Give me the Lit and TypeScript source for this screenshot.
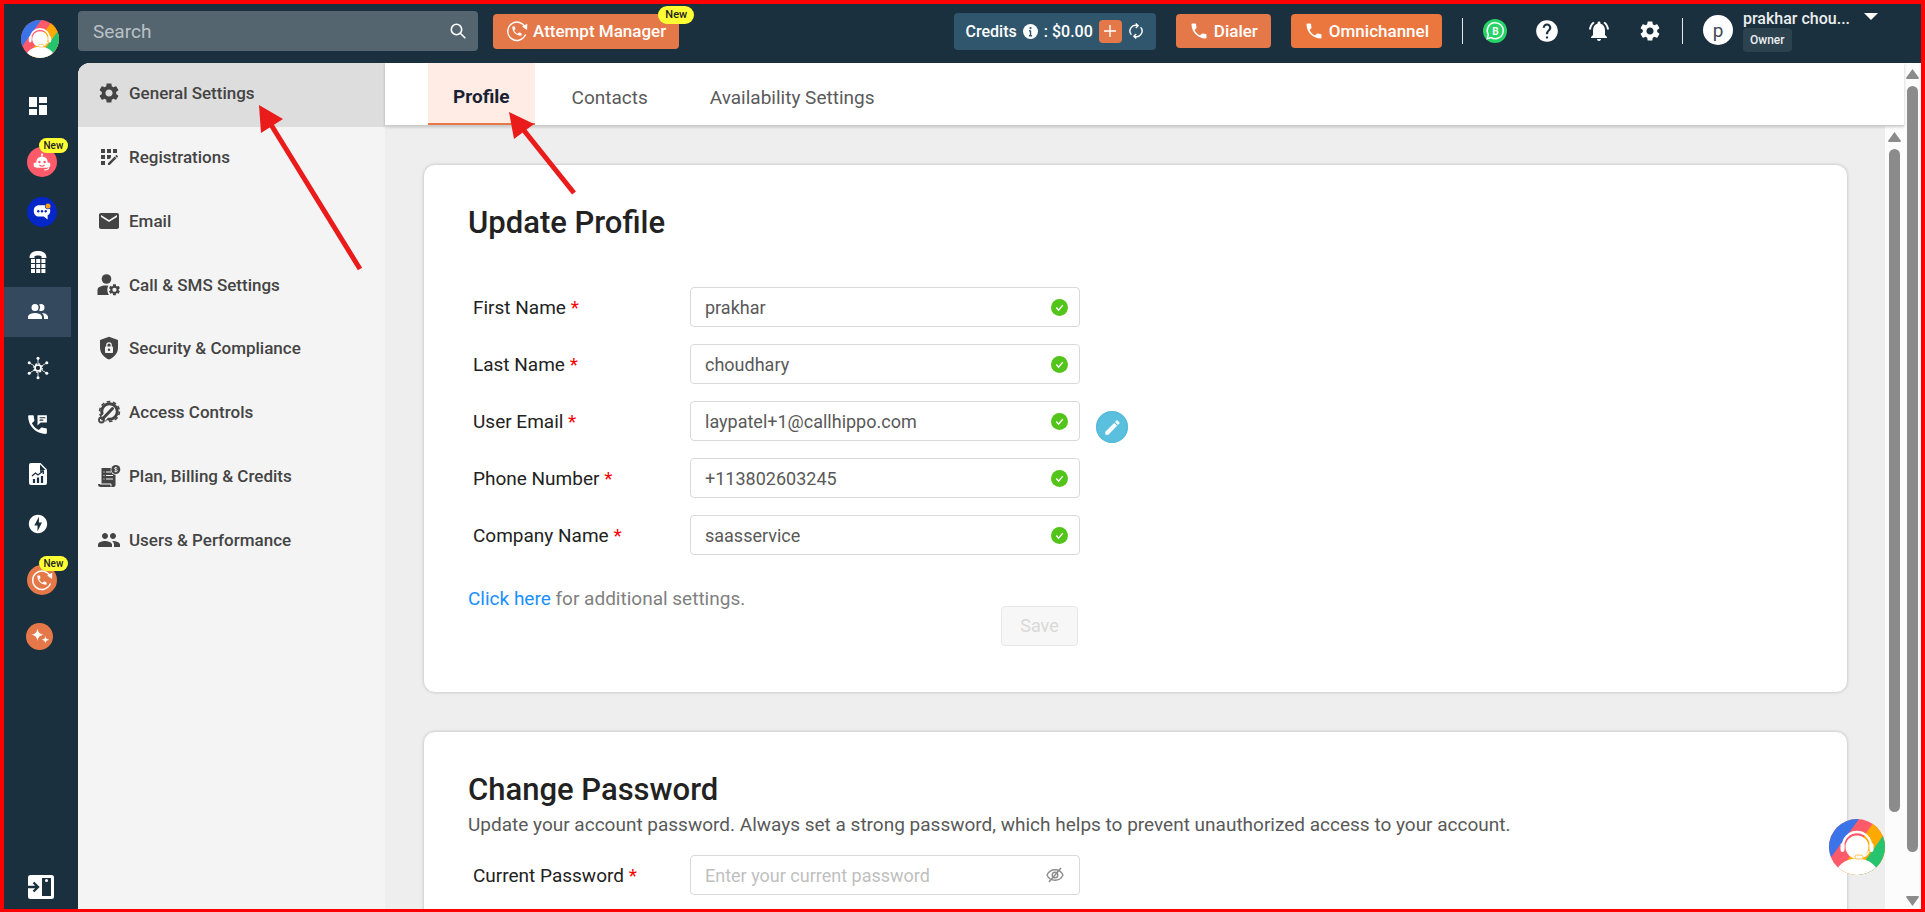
import { LitElement, html, svg, css, nothing, SVGTemplateResult, TemplateResult } from "lit";
import { customElement, state } from "lit/decorators.js";
import { classMap } from "lit/directives/class-map.js";

const icon = (size: number, body: SVGTemplateResult, box = "0 0 24 24") =>
  html`<svg width=${size} height=${size} viewBox=${box} fill="currentColor" aria-hidden="true">${body}</svg>`;

const p = (d: string) => svg`<path d=${d}></path>`;

const gear = p("M19.14 12.94c.04-.3.06-.61.06-.94 0-.32-.02-.64-.07-.94l2.03-1.58c.18-.14.23-.41.12-.61l-1.92-3.32c-.12-.22-.37-.29-.59-.22l-2.39.96c-.5-.38-1.03-.7-1.62-.94l-.36-2.54c-.04-.24-.24-.41-.48-.41h-3.84c-.24 0-.43.17-.47.41l-.36 2.54c-.59.24-1.13.57-1.62.94l-2.39-.96c-.22-.08-.47 0-.59.22L2.74 8.87c-.12.21-.08.47.12.61l2.03 1.58c-.05.3-.09.63-.09.94s.02.64.07.94l-2.03 1.58c-.18.14-.23.41-.12.61l1.92 3.32c.12.22.37.29.59.22l2.39-.96c.5.38 1.03.7 1.62.94l.36 2.54c.05.24.24.41.48.41h3.84c.24 0 .44-.17.47-.41l.36-2.54c.59-.24 1.13-.56 1.62-.94l2.39.96c.22.08.47 0 .59-.22l1.92-3.32c.12-.22.07-.47-.12-.61l-2.01-1.58zM12 15.6c-1.98 0-3.6-1.62-3.6-3.6s1.62-3.6 3.6-3.6 3.6 1.62 3.6 3.6-1.62 3.6-3.6 3.6z");
const phone = p("M6.62 10.79c1.44 2.83 3.76 5.14 6.59 6.59l2.2-2.2c.27-.27.67-.36 1.02-.24 1.12.37 2.33.57 3.57.57.55 0 1 .45 1 1V20c0 .55-.45 1-1 1-9.39 0-17-7.61-17-17 0-.55.45-1 1-1h3.5c.55 0 1 .45 1 1 0 1.25.2 2.45.57 3.57.11.35.03.74-.25 1.02l-2.2 2.2z");
const retry = svg`
  <path d="M21.2 8.6A10 10 0 1 0 21 16.4" fill="none" stroke="currentColor" stroke-width="1.6" stroke-linecap="round"></path>
  <path d="M17.6 7.2l5.6-3-.2 6.8z"></path>
  <g transform="translate(5.2 5.4) scale(.56)">${phone}</g>`;

const icons = {
  dashboard: icon(24, p("M3 13h8V3H3v10zm0 8h8v-6H3v6zm10 0h8V11h-8v10zm0-18v6h8V3h-8z")),
  robot: icon(18, svg`
    <path d="M11.3 2h1.4v4h-1.4z"></path><circle cx="12" cy="2" r="1.5"></circle>
    <path d="M12 5c5 0 7.5 3 7.5 7v1H22c1 0 1 1 1 2v2c0 1-.5 2-2 2h-1.5v.5h-15V19H3c-1.5 0-2-1-2-2v-2c0-1 0-2 1-2h2.500v-1c0-4 2.500-7 7.500-7z"></path>
    <circle cx="8.5" cy="12" r="1.7" fill="#ff5a6a"></circle><circle cx="15.5" cy="12" r="1.7" fill="#ff5a6a"></circle>
    <path d="M8.5 16c2 1.8 5 1.8 7 0" stroke="#ff5a6a" stroke-width="1.4" fill="none"></path>
    <path d="M21 19c0 3-2.5 3.5-6 3.5" stroke="currentColor" stroke-width="1.5" fill="none"></path>`),
  chatbot: icon(18, svg`
    <path d="M8 3h8c4 0 7 3 7 7 0 3-1 5.5-3.5 6.5V22l-5-4H8c-4 0-7-3-7-7.5S4 3 8 3z"></path>
    <circle cx="7" cy="11" r="1.6" fill="#0527c8"></circle><circle cx="12" cy="11" r="1.6" fill="#0527c8"></circle><circle cx="17" cy="11" r="1.6" fill="#0527c8"></circle>
    <circle cx="20" cy="4" r="4.2" fill="#0527c8"></circle><circle cx="20" cy="4" r="3.4" fill="#ff9f1a"></circle>`),
  keypad: icon(24, svg`
    <path d="M3.5 8c0-4.500 3-7 8.500-7s8.500 2.500 8.500 7H15.500V6.200c-1-1-6-1-7 0V8z"></path>
    ${[9, 14, 19].map(y => [5, 10.2, 15.4].map(x => svg`<rect x=${x} y=${y} width="4" height="4"></rect>`))}`),
  users: icon(24, p("M16 17V19H2V17S2 13 9 13 16 17 16 17M12.5 7.5A3.5 3.5 0 1 0 9 11A3.5 3.5 0 0 0 12.5 7.5M15.94 13A5.32 5.32 0 0 1 18 17V19H22V17S22 13.37 15.94 13M15 4A3.39 3.39 0 0 0 13.07 4.59A5 5 0 0 1 13.07 10.41A3.39 3.39 0 0 0 15 11A3.5 3.5 0 0 0 15 4Z")),
  hub: icon(24, svg`
    <g fill="none" stroke="currentColor"><circle cx="12" cy="12" r="3" stroke-width="1.7"></circle><circle cx="12" cy="12" r="4.2" stroke-width="1.4" stroke-dasharray="1.7 1.6"></circle>
    <path d="M12 8V2M12 16v6M15.5 10l5-3M8.5 10l-5-3M15.5 14l5 3M8.5 14l-5 3" stroke-width=".8"></path></g>
    ${[[12, 2.2], [12, 21.8], [20.8, 6.8], [3.2, 6.8], [20.8, 17.2], [3.2, 17.2]].map(([x, y]) => svg`<circle cx=${x} cy=${y} r="1.5"></circle>`)}`),
  phoneMsg: icon(25, svg`
    ${p("M20 15.5c-1.25 0-2.45-.2-3.57-.57-.35-.11-.74-.03-1.02.24l-2.2 2.2c-2.83-1.44-5.15-3.75-6.59-6.58l2.2-2.21c.28-.27.36-.66.25-1.01C8.7 6.45 8.5 5.25 8.5 4c0-.55-.45-1-1-1H4c-.55 0-1 .45-1 1 0 9.39 7.61 17 17 17 .55 0 1-.45 1-1v-3.5c0-.55-.45-1-1-1zM12 3v10l3-3h6V3h-9z")}
    <path d="M14 5.5h5.5M14 7.8h3.5" stroke="#1b303e" stroke-width="1.1"></path>`),
  report: icon(24, svg`
    <path d="M5 1h9.5L21 7.5V21a2 2 0 0 1-2 2H5a2 2 0 0 1-2-2V3a2 2 0 0 1 2-2z"></path>
    <path d="M14 2.5V8h5.5z" fill="#1b303e"></path>
    <g fill="none" stroke="#1b303e"><path d="M6 14l3.5-3 2.5 2 5-4M14 9h3.3v3" stroke-width="1.3"></path>
    <path d="M8 21v-4M12 21v-5.5M16 21v-7" stroke-width="2.2"></path></g>`),
  bolt: icon(22, p("M12 2.02c-5.51 0-9.98 4.47-9.98 9.98s4.47 9.98 9.98 9.98 9.98-4.47 9.98-9.98S17.51 2.02 12 2.02zM11.48 20v-6.26H8L13 4v6.26h3.35L11.48 20z")),
  attempt: icon(22, retry),
  sparkle: icon(20, svg`
    <path d="M9 3c.9 5 2.5 6.6 7.5 7.5C11.5 11.4 9.9 13 9 18c-.9-5-2.5-6.6-7.5-7.5C6.5 9.6 8.1 8 9 3z"></path>
    <path d="M18.5 12c.5 3 1.5 4 4.5 4.5-3 .5-4 1.5-4.5 4.5-.5-3-1.5-4-4.5-4.5 3-.5 4-1.5 4.5-4.5z"></path>`),
  panel: icon(28, svg`
    <rect x="1" y="2" width="26" height="24" rx="2.5"></rect>
    <rect x="15" y="5" width="9" height="18" fill="#1b303e"></rect><circle cx="19.5" cy="7.5" r="1.5" fill="currentColor"></circle>
    <path d="M1 14h9M6.5 9.5l4.5 4.5-4.5 4.5" fill="none" stroke="#1b303e" stroke-width="2.4"></path>`, "0 0 28 28"),
  settings: icon(24, gear),
  registration: icon(24, p("M10 4h4v4h-4zM4 16h4v4H4zM4 10h4v4H4zM4 4h4v4H4zM14 12.42V10h-4v4h2.42zM20.88 11.29l-1.17-1.17c-.16-.16-.42-.16-.58 0l-.88.88L20 12.75l.88-.88c.16-.16.16-.42 0-.58zM11 18.25V20h1.75l6.67-6.67-1.75-1.75zM16 4h4v4h-4z")),
  email: icon(24, p("M20 4H4c-1.1 0-1.99.9-1.99 2L2 18c0 1.1.9 2 2 2h16c1.1 0 2-.9 2-2V6c0-1.1-.9-2-2-2zm0 4l-8 5-8-5V6l8 5 8-5v2z")),
  userGear: icon(24, svg`
    <circle cx="9.5" cy="6" r="4.8"></circle><path d="M.5 22v-5c0-3 4-4.500 8-4.500 1 0 2 .1 2.800.3-1.500 2.700-1.300 6 .5 9.200z"></path>
    <g transform="translate(10.5 9.8) scale(.58)">${gear}</g>`),
  shield: icon(24, svg`
    <path d="M12 .8l9 3.2v7.5c0 5.5-3.8 10-9 12-5.2-2-9-6.5-9-12V4z"></path>
    <rect x="8" y="10.5" width="8" height="6.5" rx=".8" fill="#f4f4f4"></rect><path d="M9.8 11V9a2.2 2.2 0 0 1 4.4 0v2" fill="none" stroke="#f4f4f4" stroke-width="1.2"></path><circle cx="12" cy="13.7" r="1.2"></circle>`),
  access: icon(24, svg`
    <g fill="none" stroke="currentColor"><circle cx="12.5" cy="11.5" r="7.8" stroke-width="3"></circle><circle cx="12.5" cy="11.5" r="9.9" stroke-width="1.6" stroke-dasharray="3.6 2.62"></circle></g>
    <path d="M3 22L15.500 8.500" stroke="#f4f4f4" stroke-width="6"></path>
    <path d="M5.5 19L15.5 8.5" stroke="currentColor" stroke-width="3" stroke-linecap="round"></path>
    <circle cx="4.5" cy="20" r="2.500" fill="none" stroke="currentColor" stroke-width="1.8"></circle>`),
  billing: icon(24, svg`
    <path d="M4.5 4h10l1.500 6h2.500v11c0 1-.8 2-2 2H3.500c-1.500 0-2.500-1-2.500-3h3.500z"></path>
    <path d="M9 8h5M9 11.5h7M9 15h7M6.5 8h1M6.5 11.5h1M6.5 15h1M3 20h11v2.5" fill="none" stroke="#f4f4f4" stroke-width="1"></path>
    <circle cx="18.8" cy="5.5" r="5.2" fill="#f4f4f4"></circle><circle cx="18.8" cy="5.5" r="4.5"></circle>
    <path d="M20.4 4.2c-.5-1-3-1-3 .2 0 1.500 3 .8 3 2.300 0 1.200-2.500 1.200-3.200.2M18.800 2.800v5.500" fill="none" stroke="#f4f4f4" stroke-width=".8"></path>`),
  people: icon(24, p("M16 11c1.66 0 2.99-1.34 2.99-3S17.66 5 16 5c-1.66 0-3 1.34-3 3s1.34 3 3 3zm-8 0c1.66 0 2.99-1.34 2.99-3S9.66 5 8 5C6.34 5 5 6.34 5 8s1.34 3 3 3zm0 2c-2.33 0-7 1.17-7 3.5V19h14v-2.5c0-2.33-4.67-3.5-7-3.5zm8 0c-.29 0-.62.02-.97.05 1.16.84 1.97 1.97 1.97 3.45V19h6v-2.5c0-2.33-4.67-3.5-7-3.5z")),
  search: icon(16, svg`<g fill="none" stroke="currentColor" stroke-width="1.6"><circle cx="6.5" cy="6.5" r="5.2"></circle><path d="M10.3 10.3l5 5"></path></g>`, "0 0 16 16"),
  info: icon(15, svg`<circle cx="8" cy="8" r="8"></circle><circle cx="8" cy="4.3" r="1.2" fill="#30566d"></circle><path d="M8 6.8v5.7M6.5 7.2H8M6.3 12.5h3.4" stroke="#30566d" stroke-width="1.5"></path>`, "0 0 16 16"),
  plus: icon(12, svg`<path d="M6 0v12M0 6h12" stroke="currentColor" stroke-width="1.4"></path>`, "0 0 12 12"),
  sync: icon(16, svg`<g fill="none" stroke="currentColor" stroke-width="1.4"><path d="M3.4 11.7A5.6 5.6 0 0 1 9.5 2.7M12.6 4.3A5.6 5.6 0 0 1 6.5 13.3"></path><path d="M7.8.5l2.3 2.2-2.3 2.3M8.2 11l-2.3 2.3 2.3 2.2"></path></g>`, "0 0 16 16"),
  phone: icon(20, phone),
  whatsapp: html`<svg width="24" height="24" viewBox="0 0 24 24" aria-hidden="true"><circle cx="12" cy="12" r="12" fill="#25d366"></circle>
    <path d="M4.3 19.7l1-4a8 8 0 1 1 2.9 2.9z" fill="none" stroke="#fff" stroke-width="1.5"></path>
    <text x="12.4" y="15.8" text-anchor="middle" font-size="10" font-weight="700" fill="#fff">B</text></svg>`,
  help: icon(26, p("M12 2C6.48 2 2 6.48 2 12s4.48 10 10 10 10-4.48 10-10S17.52 2 12 2zm1 17h-2v-2h2v2zm2.07-7.75l-.9.92C13.45 12.9 13 13.5 13 15h-2v-.5c0-1.1.45-2.1 1.17-2.83l1.24-1.26c.37-.36.59-.86.59-1.41 0-1.1-.9-2-2-2s-2 .9-2 2H8c0-2.21 1.79-4 4-4s4 1.79 4 4c0 .88-.36 1.68-.93 2.25z")),
  bell: icon(24, p("M7.58 4.08L6.15 2.65C3.75 4.48 2.17 7.3 2.03 10.5h2c.15-2.65 1.51-4.97 3.55-6.42zm12.39 6.42h2c-.15-3.2-1.73-6.02-4.12-7.85l-1.42 1.43c2.02 1.45 3.39 3.77 3.54 6.42zM18 11c0-3.07-1.64-5.64-4.5-6.32V4c0-.83-.67-1.5-1.5-1.5s-1.5.67-1.5 1.5v.68C7.63 5.36 6 7.92 6 11v5l-2 2v1h16v-1l-2-2v-5zm-6 11c.14 0 .27-.01.4-.04.65-.14 1.18-.58 1.44-1.18.1-.24.15-.5.15-.78h-4c.01 1.1.9 2 2.01 2z")),
  caret: icon(14, svg`<path d="M0 3h14L7 10z"></path>`, "0 0 14 14"),
  check: html`<svg width="17" height="17" viewBox="0 0 17 17" aria-hidden="true"><circle cx="8.5" cy="8.5" r="8.5" fill="#52c41a"></circle><path d="M5.3 8.5l2.3 2.6 4.2-5" fill="none" stroke="#fff" stroke-width="1.4"></path></svg>`,
  pencil: icon(19, p("M3 17.25V21h3.75L17.81 9.94l-3.75-3.75L3 17.25zM20.71 7.04c.39-.39.39-1.02 0-1.41l-2.34-2.34c-.39-.39-1.02-.39-1.41 0l-1.83 1.83 3.75 3.75 1.83-1.83z")),
  eyeOff: icon(18, svg`<g fill="none" stroke="currentColor" stroke-width="1.4"><path d="M1 9c3.2-7 12.8-7 16 0-3.2 7-12.8 7-16 0z"></path><circle cx="9" cy="9" r="2.8"></circle><path d="M3 16L15 2" stroke-width="1.5"></path></g>`, "0 0 18 18"),
};

const logo = (size: number) => html`
  <svg width=${size} height=${size} viewBox="0 0 56 56" aria-hidden="true">
    <clipPath id="disc"><circle cx="28" cy="28" r="28"></circle></clipPath>
    <g clip-path="url(#disc)">
      <path d="M0 0h56v56H0z" fill="#ff5a6a"></path>
      <path d="M0 0h30L0 41z" fill="#3b74e8"></path>
      <path d="M47 0h9v56H8z" fill="#ffa900"></path>
      <path d="M56 14v42H26z" fill="#27c470"></path>
      <path d="M5 56c3-10 12-16.5 23-16.5S48 46 51 56z" fill="#fff"></path>
      <path d="M14 30v-3a14 14 0 0 1 28 0v3" fill="none" stroke="#fff" stroke-width="2.4"></path>
      <rect x="11.5" y="24" width="4" height="9" rx="2" fill="#fff"></rect>
      <rect x="40.5" y="24" width="4" height="9" rx="2" fill="#fff"></rect>
      <circle cx="28" cy="28" r="11.5" fill="#fff"></circle>
      <path d="M40 32c-1 3-3 5-6 6" fill="none" stroke="#fff" stroke-width="1.4"></path>
      <rect x="26" y="36" width="8" height="4" rx="2" fill="#fff" stroke="#ffc04d"></rect>
    </g>
  </svg>`;

interface RailItem { name: string; icon: TemplateResult; spaced?: boolean; disc?: string; badge?: boolean; }

const rail: RailItem[] = [
  { name: "Dashboard", icon: icons.dashboard },
  { name: "AI agent", icon: icons.robot, spaced: true, disc: "pink", badge: true },
  { name: "Chat", icon: icons.chatbot, disc: "blue" },
  { name: "Numbers", icon: icons.keypad },
  { name: "Users", icon: icons.users },
  { name: "Integrations", icon: icons.hub, spaced: true },
  { name: "Call logs", icon: icons.phoneMsg, spaced: true },
  { name: "Reports", icon: icons.report },
  { name: "Automation", icon: icons.bolt },
  { name: "Attempts", icon: icons.attempt, spaced: true, disc: "orange", badge: true },
  { name: "Assistant", icon: icons.sparkle, spaced: true, disc: "small" },
];

const menu: [string, TemplateResult][] = [
  ["General Settings", icons.settings],
  ["Registrations", icons.registration],
  ["Email", icons.email],
  ["Call & SMS Settings", icons.userGear],
  ["Security & Compliance", icons.shield],
  ["Access Controls", icons.access],
  ["Plan, Billing & Credits", icons.billing],
  ["Users & Performance", icons.people],
];

const fields = [
  { id: "first-name", label: "First Name", value: "prakhar", type: "text" },
  { id: "last-name", label: "Last Name", value: "choudhary", type: "text" },
  { id: "user-email", label: "User Email", value: "laypatel+1@callhippo.com", type: "email" },
  { id: "phone-number", label: "Phone Number", value: "+113802603245", type: "tel" },
  { id: "company-name", label: "Company Name", value: "saasservice", type: "text" },
];

@customElement("app-root")
export class AppRoot extends LitElement {
  @state() private rail = "Users";
  @state() private section = "General Settings";
  @state() private tab = "Profile";

  static styles = css`
    :host {
      display: block;
      position: relative;
      height: 100vh;
      box-sizing: border-box;
      border: 4px solid #f00;
      border-bottom-width: 3px;
      overflow: hidden;
      background: #1b303e;
      font-family: Roboto, "Liberation Sans", sans-serif;
      font-size: 19px;
      color: #222;
    }
    * { box-sizing: border-box; }
    button, input { font: inherit; color: inherit; }
    button { border: 0; padding: 0; background: none; cursor: pointer; }
    svg { display: block; flex: none; }
    h2, p { margin: 0; }
    a { text-decoration: none; }

    .shell { display: flex; height: 100%; }
    .rail { width: 74px; display: flex; flex-direction: column; padding: 16px 0 8px; color: #fff; }
    .brand { margin: 0 0 23px 17px; }
    .rail-item { width: 67px; height: 50px; flex: none; display: flex; align-items: center; justify-content: center; }
    .rail-item.spaced { margin-top: 6px; }
    .rail-item.active { background: #34495e; }
    .disc { position: relative; display: flex; align-items: center; justify-content: center; width: 30px; height: 30px; margin-left: 8px; border-radius: 50%; }
    .pink { background: #ff5a6a; }
    .blue { background: #0527c8; }
    .orange { background: #e57848; }
    .small { width: 27px; height: 27px; margin-left: 4px; background: #e57848; }
    .badge { position: absolute; padding: 0 5px; border-radius: 8px; background: #ff3; color: #222; font-size: 10px; font-weight: 500; line-height: 15px; }
    .disc .badge { top: -9px; left: 12px; }
    .collapse { margin: auto 0 0 23px; align-self: flex-start; }

    .main { flex: 1; min-width: 0; display: flex; flex-direction: column; }
    .header { height: 59px; flex: none; display: flex; align-items: center; padding: 0 43px 5px 0; color: #fff; }
    .search { width: 400px; height: 40px; display: flex; align-items: center; padding: 0 12px 0 15px; border-radius: 4px; background: #54656f; }
    .search input { flex: 1; min-width: 0; border: 0; outline: 0; padding: 0; background: none; }
    .search input::placeholder { color: #bbc1c5; opacity: 1; }
    .action { position: relative; display: flex; align-items: center; gap: 5px; height: 34px; padding: 0 13px; border-radius: 4px; background: #e57848; font-size: 17px; font-weight: 500; }
    .attempt { height: 35px; margin-left: 15px; }
    .attempt .badge { top: -8px; right: -15px; padding: 0 7px; border-radius: 9px; font-size: 11px; line-height: 18px; }
    .omni { background: #eb773f; }
    .tools { margin-left: auto; display: flex; align-items: center; gap: 20px; }
    .credits { display: flex; align-items: center; gap: 6px; height: 37px; padding: 0 12px; border-radius: 4px; background: #30566d; font-size: 16px; font-weight: 500; }
    .credits .add { width: 23px; height: 23px; display: flex; align-items: center; justify-content: center; border-radius: 4px; background: #e57848; }
    .rule { width: 1px; height: 26px; background: #e6e9eb; }
    .icon-row { display: flex; align-items: center; gap: 27px; }
    .account { display: flex; align-items: flex-start; }
    .avatar { width: 30px; height: 30px; margin: 5px 10px 0 0; display: flex; align-items: center; justify-content: center; border-radius: 50%; background: #fff; color: #444a59; }
    .who { width: 121px; font-size: 16px; font-weight: 500; line-height: 18px; color: #eceef0; }
    .role { display: inline-block; padding: 0 7px; border-radius: 4px; background: #2d424f; font-size: 12px; line-height: 24px; }

    .body { flex: 1; min-height: 0; display: flex; background: #eee; border-top-left-radius: 12px; overflow: hidden; }
    .menu { width: 307px; flex: none; background: #f4f4f4; }
    .menu-list { display: grid; grid-template-rows: repeat(8, 1fr); height: 510px; }
    .menu-item { display: flex; align-items: center; gap: 8px; padding: 0 19px 3px; color: #444; font-size: 17px; font-weight: 500; }
    .menu-item.active { background: #ddd; }

    .page { flex: 1; min-width: 0; display: flex; flex-direction: column; }
    .tabs { position: relative; height: 63px; flex: none; display: flex; padding-left: 43px; background: #fff; border-bottom: 1px solid #ccc; box-shadow: 0 1px 3px rgba(0, 0, 0, .2); }
    .tab { padding: 8px 31px 0; border-bottom: 2px solid transparent; color: #5a5a5a; }
    .tab.active { margin-right: 6px; padding: 6px 25px 0; background: #ffece5; border-color: #e57848; color: #1a1f33; font-weight: 700; }
    .scroll { flex: 1; min-height: 0; display: flex; }
    .content { flex: 1; min-width: 0; overflow: hidden; padding: 38px 37px 0 38px; }
    .card { margin-bottom: 38px; padding: 39px 44px 46px; border: 1px solid #d8d8d8; border-radius: 12px; background: #fff; box-shadow: 0 0 3px rgba(0, 0, 0, .12); }
    h2 { font-size: 31px; font-weight: 500; line-height: 38px; }
    .fields { display: grid; gap: 17px; margin-top: 45px; }
    .field { display: grid; grid-template-columns: 217px 390px 48px; align-items: center; padding-left: 5px; }
    .req { color: #f00; }
    .box { display: flex; align-items: center; height: 40px; padding: 0 11px 0 14px; border: 1px solid #d9d9d9; border-radius: 4px; background: #fff; font-size: 18px; }
    .box input { flex: 1; min-width: 0; border: 0; outline: 0; padding: 0; background: none; color: #595959; }
    .box input::placeholder { color: #bfbfbf; opacity: 1; }
    .reveal { margin-right: 4px; color: #8c8c8c; }
    .edit-slot { height: 40px; padding: 10px 0 0 16px; }
    .edit { width: 32px; height: 32px; display: flex; align-items: center; justify-content: center; border-radius: 50%; background: #5bc0de; color: #fff; box-shadow: inset 0 0 2px #46a8c6; }
    .foot { display: flex; justify-content: space-between; align-items: flex-start; max-width: 610px; margin-top: 32px; color: #808080; line-height: 24px; }
    .foot a { color: #1890ff; }
    .save { width: 77px; height: 40px; margin-top: 19px; border: 1px solid #e8e8e8; border-radius: 4px; background: #f7f7f7; color: #d9d9d9; font-size: 18px; }
    .note { margin-top: 4px; color: #595959; line-height: 24px; }
    .note + .fields { margin-top: 18px; }

    .bar { flex: none; display: flex; flex-direction: column; align-items: center; padding-top: 6px; background: #fcfcfc; }
    .outer { width: 17px; }
    .inner { width: 19px; }
    .up, .down { width: 13px; height: 10px; background: #8b8b8b; }
    .up { clip-path: polygon(50% 0, 100% 90%, 95% 100%, 5% 100%, 0 90%); }
    .down { clip-path: polygon(50% 100%, 100% 10%, 95% 0, 5% 0, 0 10%); margin: 44px 0 3px; }
    .thumb { width: 11px; flex: 1; margin-top: 7px; border-radius: 6px; background: #8b8b8b; }
    .inner .thumb { margin-bottom: 97px; }

    .helper { position: absolute; right: 36px; bottom: 34px; }
    .marks { position: absolute; top: -4px; left: -4px; pointer-events: none; }
  `;

  private renderRail() {
    return html`
      <nav class="rail" aria-label="Main">
        <a class="brand" href="#" aria-label="Home">${logo(38)}</a>
        ${rail.map(item => html`
          <button class=${classMap({ "rail-item": true, spaced: !!item.spaced, active: this.rail === item.name })}
            aria-label=${item.name} @click=${() => (this.rail = item.name)}>
            ${item.disc
              ? html`<span class="disc ${item.disc}">${item.icon}${item.badge ? html`<span class="badge">New</span>` : nothing}</span>`
              : item.icon}
          </button>`)}
        <button class="collapse" aria-label="Expand sidebar">${icons.panel}</button>
      </nav>`;
  }

  private renderHeader() {
    return html`
      <header class="header">
        <label class="search">
          <input type="search" placeholder="Search" aria-label="Search" />${icons.search}
        </label>
        <button class="action attempt">${icons.attempt}Attempt Manager<span class="badge">New</span></button>
        <div class="tools">
          <div class="credits">
            <span>Credits</span>${icons.info}<span>: $0.00</span>
            <button class="add" aria-label="Add credits">${icons.plus}</button>
            <button aria-label="Refresh credits">${icons.sync}</button>
          </div>
          <button class="action">${icons.phone}Dialer</button>
          <button class="action omni">${icons.phone}Omnichannel</button>
          <span class="rule"></span>
          <div class="icon-row">
            <button aria-label="WhatsApp Business">${icons.whatsapp}</button>
            <button aria-label="Help">${icons.help}</button>
            <button aria-label="Notifications">${icons.bell}</button>
            <button aria-label="Settings">${icons.settings}</button>
          </div>
          <span class="rule"></span>
          <div class="account">
            <span class="avatar">p</span>
            <div class="who"><div>prakhar chou...</div><span class="role">Owner</span></div>
            <button aria-label="Account menu">${icons.caret}</button>
          </div>
        </div>
      </header>`;
  }

  private renderLabel(id: string, label: string) {
    return html`<label for=${id}>${label} <span class="req">*</span></label>`;
  }

  render() {
    return html`
      <div class="shell">
        ${this.renderRail()}
        <div class="main">
          ${this.renderHeader()}
          <div class="body">
            <nav class="menu" aria-label="Settings">
              <div class="menu-list">
                ${menu.map(([name, glyph]) => html`
                  <button class=${classMap({ "menu-item": true, active: this.section === name })}
                    @click=${() => (this.section = name)}>${glyph}${name}</button>`)}
              </div>
            </nav>
            <main class="page">
              <div class="tabs" role="tablist">
                ${["Profile", "Contacts", "Availability Settings"].map(name => html`
                  <button role="tab" class=${classMap({ tab: true, active: this.tab === name })}
                    aria-selected=${this.tab === name} @click=${() => (this.tab = name)}>${name}</button>`)}
              </div>
              <div class="scroll">
                <div class="content">
                  <section class="card">
                    <h2>Update Profile</h2>
                    <div class="fields">
                      ${fields.map(f => html`
                        <div class="field">
                          ${this.renderLabel(f.id, f.label)}
                          <div class="box"><input id=${f.id} type=${f.type} .value=${f.value} />${icons.check}</div>
                          ${f.id === "user-email"
                            ? html`<div class="edit-slot"><button class="edit" aria-label="Edit email">${icons.pencil}</button></div>`
                            : nothing}
                        </div>`)}
                    </div>
                    <div class="foot">
                      <p><a href="#">Click here</a> for additional settings.</p>
                      <button class="save" disabled>Save</button>
                    </div>
                  </section>
                  <section class="card">
                    <h2>Change Password</h2>
                    <p class="note">Update your account password. Always set a strong password, which helps to prevent unauthorized access to your account.</p>
                    <div class="fields">
                      <div class="field">
                        ${this.renderLabel("current-password", "Current Password")}
                        <div class="box">
                          <input id="current-password" type="password" placeholder="Enter your current password" />
                          <button class="reveal" aria-label="Show password">${icons.eyeOff}</button>
                        </div>
                      </div>
                    </div>
                  </section>
                </div>
                <div class="bar inner"><span class="up"></span><span class="thumb"></span></div>
              </div>
            </main>
            <div class="bar outer"><span class="up"></span><span class="thumb"></span><span class="down"></span></div>
          </div>
        </div>
      </div>
      <button class="helper" aria-label="Support chat">${logo(56)}</button>
      <svg class="marks" width="600" height="290" viewBox="0 0 600 290" fill="#ea1b1b" stroke="#ea1b1b" aria-hidden="true">
        <path d="M270 123L360 269" stroke-width="5"></path><path d="M259 105l24 14-22 14z" stroke="none"></path>
        <path d="M522 128L574 193" stroke-width="5"></path><path d="M509 112l25 12-20 15z" stroke="none"></path>
      </svg>`;
  }
}
